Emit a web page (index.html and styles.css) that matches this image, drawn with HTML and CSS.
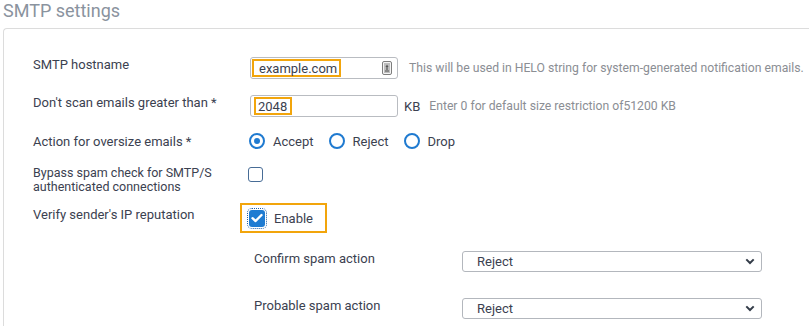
FILE: index.html
```html
<!DOCTYPE html>
<html>
<head>
<meta charset="utf-8">
<link rel="stylesheet" href="styles.css">
</head>
<body>
<h1 class="title">SMTP settings</h1>
<div class="panel">
  <div class="form">
    <div class="row row-top">
      <div class="label">SMTP hostname</div>
      <div class="field">
        <div class="input wide">
          <span class="hl">example.com</span>
          <svg class="card-icon" width="10" height="14" viewBox="0 0 10 14">
            <rect x="0.5" y="0.5" width="9" height="13" rx="1.5" fill="#f4f4f4" stroke="#7d7d7d"/>
            <rect x="2" y="2" width="6" height="10" fill="#bdbdbd"/>
            <path d="M5 3.5 L3.5 6 H6.5 Z" fill="#555"/>
            <rect x="4.4" y="6" width="1.2" height="3" fill="#555"/>
            <rect x="3" y="9.5" width="4" height="1" fill="#555"/>
          </svg>
        </div>
        <span class="help">This will be used in HELO string for system-generated notification emails.</span>
      </div>
    </div>
    <div class="row row-top">
      <div class="label">Don't scan emails greater than *</div>
      <div class="field">
        <div class="input wide"><span class="hl num">2048</span></div>
        <span class="unit">KB</span>
        <span class="help">Enter 0 for default size restriction of51200 KB</span>
      </div>
    </div>
    <div class="row">
      <div class="label">Action for oversize emails *</div>
      <div class="field radios">
        <label class="radio-opt"><span class="radio on"></span>Accept</label>
        <label class="radio-opt"><span class="radio"></span>Reject</label>
        <label class="radio-opt"><span class="radio"></span>Drop</label>
      </div>
    </div>
    <div class="row row-top">
      <div class="label two">Bypass spam check for SMTP/S<br>authenticated connections</div>
      <div class="field"><span class="check"></span></div>
    </div>
    <div class="row row-top">
      <div class="label verify">Verify sender's IP reputation</div>
      <div class="field">
        <div class="focus-box">
          <span class="check on">
            <svg width="12" height="10" viewBox="0 0 12 10"><path d="M1.5 5.2 L4.6 8 L10.5 2" fill="none" stroke="#fff" stroke-width="2.4" stroke-linecap="round" stroke-linejoin="round"/></svg>
          </span>
          <span class="enable">Enable</span>
        </div>
      </div>
    </div>
    <div class="sub sub1">
      <div class="sublabel">Confirm spam action</div>
      <div class="select"><span>Reject</span>
        <svg width="10" height="7" viewBox="0 0 10 7"><path d="M1.3 1.4 L5 5 L8.7 1.4" fill="none" stroke="#333c48" stroke-width="2"/></svg>
      </div>
    </div>
    <div class="sub sub2">
      <div class="sublabel">Probable spam action</div>
      <div class="select"><span>Reject</span>
        <svg width="10" height="7" viewBox="0 0 10 7"><path d="M1.3 1.4 L5 5 L8.7 1.4" fill="none" stroke="#333c48" stroke-width="2"/></svg>
      </div>
    </div>
  </div>
</div>
</body>
</html>
```

FILE: styles.css
```css
html, body {
  margin: 0;
  padding: 0;
  background: #fff;
  overflow: hidden;
  width: 809px;
  height: 326px;
}
body {
  font-family: Roboto, "Liberation Sans", sans-serif;
  font-size: 13px;
  color: #3b4150;
}
.title {
  margin: 0;
  padding: 0 0 0 3px;
  font-size: 18px;
  line-height: 22px;
  font-weight: 400;
  color: #8a939e;
  height: 22px;
}
.panel {
  margin: 6px 0 0 3px;
  width: 806px;
  height: 310px;
  border: 1px solid #dcdcdc;
  border-right: none;
  border-top-left-radius: 4px;
  box-sizing: border-box;
  padding: 0 0 0 29px;
}
.form {
  display: flex;
  flex-direction: column;
}
.row {
  display: grid;
  grid-template-columns: 217px auto;
  align-items: center;
}
.row:nth-child(1) { margin-top: 28px; }
.row:nth-child(2) { margin-top: 16px; }
.row:nth-child(3) { margin-top: 16px; }
.row:nth-child(4) { margin-top: 18px; }
.row:nth-child(5) { margin-top: 9px; }
.row-top { align-items: start; }
.label {
  line-height: 15px;
  white-space: nowrap;
}
.label.two {
  font-size: 12.5px;
  line-height: 14px;
  margin-top: -1px;
}
.label.verify {
  padding-top: 4px;
}
.field {
  display: flex;
  align-items: center;
}
.input {
  height: 22px;
  box-sizing: border-box;
  border: 1px solid #b9bcc1;
  border-radius: 3px;
  display: flex;
  align-items: center;
  padding: 0 0 0 1px;
  position: relative;
}
.input.wide { width: 148px; }
.hl {
  border: 2px solid #f2a50c;
  height: 18px;
  box-sizing: border-box;
  display: flex;
  align-items: center;
  padding: 0 2px 0 5px;
  color: #3b4150;
  font-size: 13px;
}
.hl.num { padding: 0 3px 0 2px; margin-left: 2px; }
.card-icon {
  position: absolute;
  right: 5px;
  top: 3px;
}
.help {
  color: #8b8e94;
  font-size: 12.2px;
  margin-left: 11px;
  white-space: nowrap;
}
.unit {
  margin-left: 6px;
  color: #3b4150;
}
.unit + .help { margin-left: 9px; }
.radio-opt {
  display: flex;
  align-items: center;
  margin-right: 15px;
}
.radio-opt:first-child { margin-left: -1px; }
.radio {
  width: 12px;
  height: 12px;
  border: 2px solid #1f7ad0;
  border-radius: 50%;
  margin-right: 8px;
  position: relative;
}
.radio.on::after {
  content: "";
  position: absolute;
  left: 3px;
  top: 3px;
  width: 6px;
  height: 6px;
  border-radius: 50%;
  background: #1f7ad0;
}
.check {
  width: 15px;
  height: 15px;
  box-sizing: border-box;
  border: 1.5px solid #486c96;
  border-radius: 3px;
  margin-left: -2px;
  display: inline-block;
}
.focus-box {
  margin-left: -10px;
  height: 30px;
  box-sizing: border-box;
  border: 2px solid #f2a50c;
  display: flex;
  align-items: center;
  padding: 0 12px 0 7px;
}
.check.on {
  width: 16px;
  height: 17px;
  margin-left: 0;
  background: #1e7bd2;
  border: none;
  outline: 1px dotted #1e5fa8;
  outline-offset: 1px;
  display: flex;
  align-items: center;
  justify-content: center;
}
.enable {
  margin-left: 9px;
}
.sub {
  display: grid;
  grid-template-columns: 208px 300px;
  padding-left: 221px;
  align-items: start;
}
.sub1 { margin-top: 18px; }
.sub2 { margin-top: 26px; }
.sublabel {
  line-height: 15px;
}
.select {
  height: 21px;
  box-sizing: border-box;
  border: 1px solid #b3b7bd;
  border-radius: 3px;
  display: flex;
  align-items: center;
  justify-content: space-between;
  padding: 0 6px 0 14px;
  color: #3b4150;
}
```
